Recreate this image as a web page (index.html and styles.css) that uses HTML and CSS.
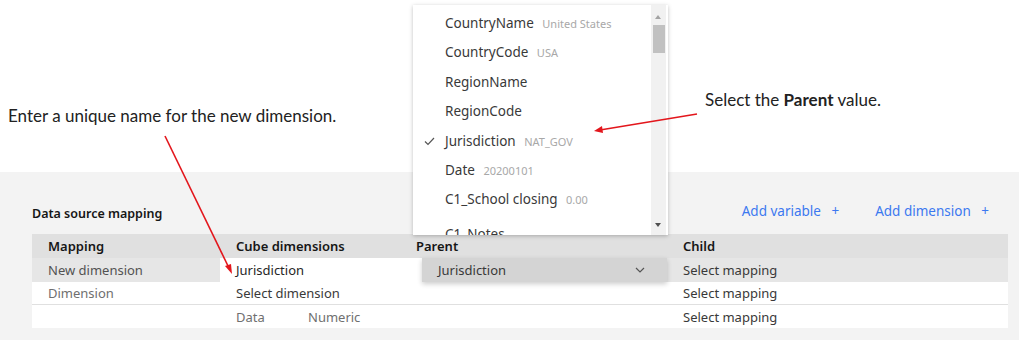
FILE: index.html
```html
<!DOCTYPE html>
<html>
<head>
	<meta charset="utf-8"/>
	<title>Data source mapping</title>
	<link rel="stylesheet" href="styles.css">
</head>
<body>
<div class="stage">
	<div class="top">
		<p class="note note-left">Enter a unique name for the new dimension.</p>
		<p class="note note-right">Select the <b>Parent</b> value.</p>
	</div>

	<div class="panel">
		<div class="panel-head">
			<h2>Data source mapping</h2>
			<div class="actions">
				<a>Add variable <span class="plus">+</span></a>
				<a>Add dimension <span class="plus">+</span></a>
			</div>
		</div>
		<div class="grid">
			<div class="row head">
				<div class="cell">Mapping</div>
				<div class="cell">Cube dimensions</div>
				<div class="cell">Parent</div>
				<div class="cell">Child</div>
			</div>
			<div class="row active">
				<div class="cell soft">New dimension</div>
				<div class="cell input">Jurisdiction</div>
				<div class="cell pick">
					<div class="select">Jurisdiction
						<svg width="10" height="6" viewBox="0 0 10 6"><polyline points="1,1 5,5 9,1" fill="none" stroke="#555" stroke-width="1.2"/></svg>
					</div>
				</div>
				<div class="cell">Select mapping</div>
			</div>
			<div class="row line">
				<div class="cell faint">Dimension</div>
				<div class="cell">Select dimension</div>
				<div class="cell"></div>
				<div class="cell">Select mapping</div>
			</div>
			<div class="row">
				<div class="cell"></div>
				<div class="cell faint"><span class="type">Data</span>Numeric</div>
				<div class="cell"></div>
				<div class="cell">Select mapping</div>
			</div>
		</div>
	</div>

	<!-- open dropdown for Parent -->
	<div class="menu">
		<ul>
			<li>CountryName <small>United States</small></li>
			<li>CountryCode <small>USA</small></li>
			<li>RegionName</li>
			<li>RegionCode</li>
			<li class="checked">
				<svg class="tick" width="11" height="9" viewBox="0 0 11 9"><polyline points="1,4.5 4,7.5 10,1" fill="none" stroke="#555" stroke-width="1.2"/></svg>
				Jurisdiction <small>NAT_GOV</small></li>
			<li>Date <small>20200101</small></li>
			<li>C1_School closing <small>0.00</small></li>
			<li class="last">C1_Notes</li>
		</ul>
		<div class="scroll">
			<span class="up"></span>
			<span class="thumb"></span>
			<span class="down"></span>
		</div>
	</div>

	<svg class="arrows" width="1024" height="345" viewBox="0 0 1024 345">
		<line x1="165" y1="136" x2="229" y2="268" stroke="#e3161c" stroke-width="1.6"/>
		<polygon points="232,274 225,266 231,264" fill="#e3161c"/>
		<line x1="697" y1="114" x2="600" y2="130" stroke="#e3161c" stroke-width="1.6"/>
		<polygon points="594,131 602,126 603,133" fill="#e3161c"/>
	</svg>
</div>
</body>
</html>
```

FILE: styles.css
```css
*{margin: 0;padding: 0;box-sizing: border-box;}
ul{list-style-type: none;}
body{
	background: #fff;
	font-family: "Noto Sans", "Liberation Sans", sans-serif;
	font-size: 13px;
	color: #262626;
}
.stage{
	position: relative;
	width: 1024px;
	height: 345px;
	overflow: hidden;
}
.top{
	height: 172px;
}
.note{
	position: absolute;
	font-family: Lato, "Liberation Sans", sans-serif;
	font-size: 17px;
	line-height: 20px;
	color: #222;
}
.note-left{
	left: 8px;
	top: 106px;
}
.note-right{
	left: 705px;
	top: 90px;
}
.note b{
	font-weight: 700;
}

.panel{
	width: 1019px;
	height: 168px;
	background: #f3f3f3;
	padding: 30px 11px 0 32px;
}
.panel-head{
	display: flex;
	justify-content: space-between;
	align-items: center;
	height: 22px;
	margin-bottom: 10px;
}
.panel-head h2{
	font-size: 12.5px;
	font-weight: 600;
	color: #161616;
}
.actions{
	display: flex;
	gap: 36px;
	padding-right: 19px;
	padding-bottom: 5px;
}
.actions a{
	color: #3b78f0;
	font-size: 13.5px;
}
.plus{
	margin-left: 7px;
}

.grid{
	width: 976px;
}
.row{
	display: grid;
	grid-template-columns: 188px 180px 267px 1fr;
	height: 23px;
	background: #fff;
}
.row .cell{
	display: flex;
	align-items: center;
	padding-left: 16px;
	white-space: nowrap;
	color: #393939;
}
.row.head{
	height: 24px;
	background: #e0e0e0;
}
.row.head .cell{
	font-weight: 600;
	color: #161616;
}
.row.active{
	height: 24px;
	background: #e6e6e6;
}
.row.line{
	border-bottom: 1px solid #e0e0e0;
}
.cell.soft{
	color: #525252;
}
.cell.faint{
	color: #6f6f6f;
}
.cell.input{
	background: #fff;
	color: #262626;
}
.cell.pick{
	padding-left: 22px !important;
	background: linear-gradient(to right, #fff 22px, transparent 22px);
}
.select{
	display: flex;
	align-items: center;
	justify-content: space-between;
	width: 100%;
	height: 24px;
	padding: 0 22px 0 16px;
	background: #d4d4d4;
	color: #393939;
	box-shadow: 0 2px 5px rgba(0,0,0,0.2);
}
.type{
	width: 72px;
}

.menu{
	position: absolute;
	left: 413px;
	top: 5px;
	width: 255px;
	height: 230px;
	background: #fff;
	box-shadow: 0 1px 4px rgba(0,0,0,0.25);
	overflow: hidden;
}
.menu ul{
	padding-top: 4px;
}
.menu li{
	position: relative;
	height: 29.4px;
	line-height: 29.4px;
	padding-left: 32px;
	font-size: 13.5px;
	color: #393939;
	white-space: nowrap;
}
.menu li.last{
	padding-top: 5px;
}
.menu small{
	margin-left: 5px;
	font-size: 11px;
	color: #a8a8a8;
}
.tick{
	position: absolute;
	left: 11px;
	top: 10px;
}
.scroll{
	position: absolute;
	right: 2px;
	top: 0;
	width: 15px;
	height: 230px;
	background: #f1f1f1;
}
.scroll .up,.scroll .down{
	position: absolute;
	left: 4px;
	border-left: 3.5px solid transparent;
	border-right: 3.5px solid transparent;
}
.scroll .up{
	top: 10px;
	border-bottom: 4px solid #a3a3a3;
}
.scroll .down{
	bottom: 8px;
	border-top: 4px solid #505050;
}
.thumb{
	position: absolute;
	left: 2px;
	top: 20px;
	width: 12px;
	height: 28px;
	background: #c1c1c1;
}

.arrows{
	position: absolute;
	left: 0;
	top: 0;
	pointer-events: none;
}
```
